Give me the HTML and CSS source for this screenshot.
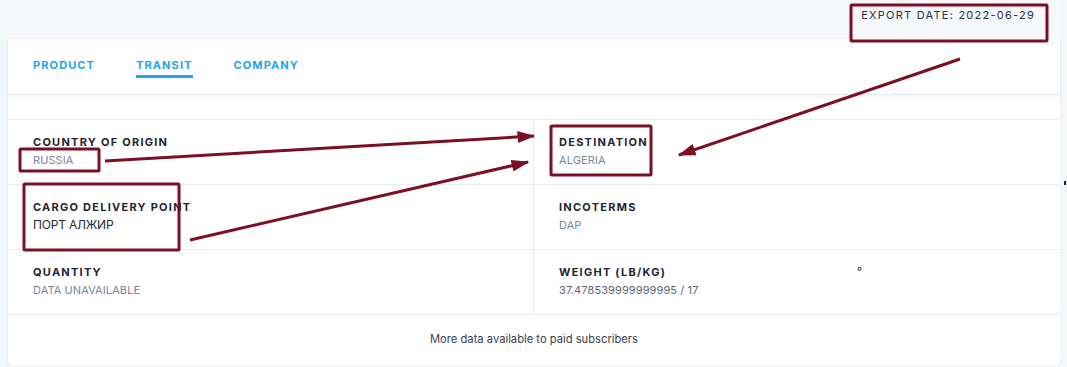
FILE: index.html
```html
<!DOCTYPE html>
<html lang="en">

<head>
    <meta charset="UTF-8">
    <meta name="viewport" content="width=device-width, initial-scale=1.0">
    <title>Shipment details</title>

    <link rel="stylesheet" href="styles.css">
</head>

<body>
    <div class="page">
        <div class="panel-head">
            <span class="export-date">Export date: 2022-06-29</span>
        </div>

        <div class="card">
            <div class="tabs">
                <span class="tab">Product</span>
                <span class="tab tab-active">Transit</span>
                <span class="tab">Company</span>
            </div>

            <div class="spacer"></div>

            <div class="details">
                <div class="cell">
                    <div class="cell-label">Country of origin</div>
                    <div class="cell-value">Russia</div>
                </div>
                <div class="cell">
                    <div class="cell-label">Destination</div>
                    <div class="cell-value">Algeria</div>
                </div>
                <div class="cell">
                    <div class="cell-label">Cargo delivery point</div>
                    <div class="cell-value cell-value-dark">ПОРТ АЛЖИР</div>
                </div>
                <div class="cell">
                    <div class="cell-label">Incoterms</div>
                    <div class="cell-value">DAP</div>
                </div>
                <div class="cell">
                    <div class="cell-label">Quantity</div>
                    <div class="cell-value">Data unavailable</div>
                </div>
                <div class="cell">
                    <div class="cell-label">Weight (lb/kg) <span class="stray-dot">°</span></div>
                    <div class="cell-value cell-value-plain">37.478539999999995 / 17</div>
                </div>
            </div>

            <div class="more-data">More data available to paid subscribers</div>
        </div>
    </div>

    <!-- annotation marks drawn over the screenshot -->
    <svg class="marks" width="1067" height="367" viewBox="0 0 1067 367">
        <defs>
            <marker id="head" markerWidth="6" markerHeight="4" refX="5.5" refY="2" orient="auto"
                markerUnits="strokeWidth">
                <path d="M0,0 L6,2 L0,4 Z" fill="#7b1025" />
            </marker>
        </defs>
        <g fill="none" stroke="#7b1025" stroke-width="3">
            <rect x="851" y="5" width="196" height="36" rx="1" />
            <rect x="20" y="149" width="79" height="22" rx="1" />
            <rect x="24" y="184" width="155" height="66" rx="1" />
            <rect x="551" y="126" width="100" height="49" rx="1" />
            <line x1="960" y1="59" x2="679" y2="155" marker-end="url(#head)" />
            <line x1="105" y1="161" x2="534" y2="136" marker-end="url(#head)" />
            <line x1="190" y1="240" x2="528" y2="162" marker-end="url(#head)" />
        </g>
        <rect x="1064" y="181" width="2" height="4" fill="#222" />
    </svg>
</body>

</html>
```

FILE: styles.css
```css
* {
    box-sizing: border-box;
}

body {
    margin: 0;
    background-color: #f1f7fa;
    font-family: Inter, "Noto Sans", sans-serif;
    color: #1f2533;
}

.page {
    width: 1052px;
    margin-left: 8px;
}

.panel-head {
    height: 39px;
    background-color: #f6f8fc;
    display: flex;
    justify-content: flex-end;
    padding: 8px 25px 0 0;
}

.export-date {
    font-size: 11px;
    letter-spacing: 1.25px;
    text-transform: uppercase;
    color: #2a3040;
}

.card {
    background-color: #fff;
    border-radius: 0 0 4px 4px;
    box-shadow: 0 1px 2px rgba(30, 40, 60, 0.12);
}

.tabs {
    height: 56px;
    display: flex;
    gap: 41px;
    padding: 19px 25px 0;
    border-bottom: 1px solid #e4e7ee;
    box-shadow: 0 2px 4px rgba(30, 40, 80, 0.05);
}

.tab {
    font-size: 11px;
    font-weight: 700;
    letter-spacing: 1.1px;
    text-transform: uppercase;
    color: #1ea5ea;
    height: 20px;
}

.tab-active {
    border-bottom: 3px solid #1ea5ea;
}

.spacer {
    height: 24px;
}

.details {
    display: grid;
    grid-template-columns: 1fr 1fr;
    border-top: 1px solid #e8ebf0;
}

.cell {
    height: 65px;
    padding: 15px 25px 0;
    border-bottom: 1px solid #e8ebf0;
}

.cell:nth-child(odd) {
    border-right: 1px solid #e8ebf0;
}

.cell-label {
    font-size: 11px;
    font-weight: 700;
    letter-spacing: 1.25px;
    text-transform: uppercase;
    line-height: 14px;
    position: relative;
}

.stray-dot {
    position: absolute;
    left: 298px;
    top: -1px;
    font-weight: 400;
    letter-spacing: 0;
}

.cell-value {
    margin-top: 4px;
    font-size: 11px;
    letter-spacing: 0.1px;
    text-transform: uppercase;
    color: #7b8699;
    line-height: 14px;
}

.cell-value-dark {
    font-size: 12px;
    letter-spacing: -0.2px;
    color: #262a33;
}

.cell-value-plain {
    text-transform: none;
    color: #5d6678;
}

.more-data {
    height: 50px;
    display: flex;
    align-items: center;
    justify-content: center;
    font-size: 11.2px;
    color: #3a4050;
    padding-bottom: 2px;
}

.marks {
    position: absolute;
    left: 0;
    top: 0;
    pointer-events: none;
}
```
